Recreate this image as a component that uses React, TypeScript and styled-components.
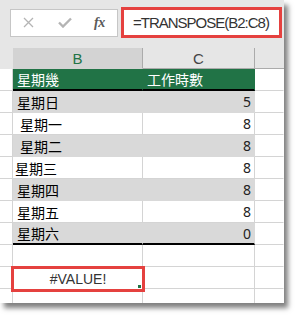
import React from "react";
import styled, { createGlobalStyle } from "styled-components";

const Global = createGlobalStyle`
  html, body { margin: 0; padding: 0; background: #ffffff; }
  body { font-family: "Liberation Sans", "Noto Sans CJK TC", sans-serif; }
`;

const Page = styled.div`
  width: 299px;
  height: 320px;
  background: #ffffff;
`;

const Panel = styled.div`
  width: 284px;
  height: 303px;
  background: #e6e6e6;
  box-shadow: 4px 5px 5px rgba(0, 0, 0, 0.5);
  display: flex;
  flex-direction: column;
  overflow: hidden;
`;

const FormulaBar = styled.div`
  display: flex;
  align-items: center;
  height: 31px;
  margin-top: 7px;
  padding-left: 10px;
  gap: 3px;
`;

const ButtonBox = styled.div`
  width: 108px;
  height: 28px;
  box-sizing: border-box;
  background: #ffffff;
  border: 1px solid #c6c6c6;
  display: flex;
  align-items: center;
  padding-left: 12px;
  gap: 24px;
`;

const Fx = styled.span`
  font-family: "Liberation Serif", serif;
  font-style: italic;
  font-weight: bold;
  font-size: 14px;
  color: #5a5a5a;
  margin-left: -2px;
  letter-spacing: -0.5px;
`;

const FormulaBox = styled.div`
  width: 161px;
  height: 31px;
  box-sizing: border-box;
  background: #ffffff;
  border: 3px solid #e5413f;
  display: flex;
  align-items: center;
  padding-left: 9px;
  font-family: "Liberation Sans", sans-serif;
  font-size: 15px;
  letter-spacing: -1px;
  color: #333;
`;

const Sheet = styled.div`
  margin-top: 9px;
  display: grid;
  grid-template-columns: 13px 130px 112px 29px;
  grid-template-rows: 22px 22px 22px 22px 22px 22px 22px 22px 22px 22px 22px 22px;
  flex: 1;
`;

const Corner = styled.div`
  background: #e6e6e6;
`;

const ColHead = styled.div<{ $active?: boolean }>`
  box-sizing: border-box;
  background: ${(p) => (p.$active ? "#d3d3d3" : "#e6e6e6")};
  border-right: 1px solid #ababab;
  border-bottom: 1px solid ${(p) => (p.$active ? "#d3d3d3" : "#ababab")};
  display: flex;
  align-items: center;
  justify-content: center;
  font-family: "Liberation Sans", sans-serif;
  font-size: 15px;
  color: ${(p) => (p.$active ? "#217346" : "#444444")};
  margin-top: 1px;
`;

const HeadFill = styled.div`
  background: #e6e6e6;
  border-bottom: 1px solid #ababab;
  box-sizing: border-box;
`;

const Cell = styled.div<{
  $fill?: string;
  $thick?: boolean;
  $align?: "left" | "right" | "center";
  $color?: string;
  $pad?: number;
}>`
  box-sizing: border-box;
  background: ${(p) => p.$fill ?? "#ffffff"};
  border-right: 1px solid ${(p) => (p.$fill && p.$fill !== "#ffffff" ? p.$fill : "#d4d4d4")};
  border-bottom: ${(p) =>
    p.$thick ? "2px solid #000000" : `1px solid ${p.$fill && p.$fill !== "#ffffff" ? p.$fill : "#d4d4d4"}`};
  display: flex;
  align-items: center;
  justify-content: ${(p) =>
    p.$align === "right" ? "flex-end" : p.$align === "center" ? "center" : "flex-start"};
  padding: 0 3px 0 ${(p) => p.$pad ?? 4}px;
  font-family: "Noto Sans", "Noto Sans CJK TC", sans-serif;
  font-size: 14px;
  color: ${(p) => p.$color ?? "#000000"};
  white-space: pre;
  overflow: hidden;
`;

const Grid = styled.div<{ $right?: boolean }>`
  box-sizing: border-box;
  background: #ffffff;
  border-bottom: 1px solid #d4d4d4;
  border-right: 1px solid ${(p) => (p.$right ? "transparent" : "#d4d4d4")};
`;

const ErrorCell = styled.div`
  position: relative;
  box-sizing: border-box;
  margin: -1px -2px -3px -2px;
  border: 3px solid #e5413f;
  background: #ffffff;
  display: flex;
  align-items: center;
  justify-content: center;
  font-family: "Liberation Sans", sans-serif;
  font-size: 14px;
  color: #333333;
`;

const Handle = styled.span`
  position: absolute;
  right: 1px;
  bottom: 1px;
  width: 3px;
  height: 3px;
  background: #217346;
`;

const XIcon = () => (
  <svg width="11" height="11" viewBox="0 0 11 11">
    <path d="M1 1 L10 10 M10 1 L1 10" stroke="#b4b4b4" strokeWidth="1.3" fill="none" />
  </svg>
);

const CheckIcon = () => (
  <svg width="14" height="11" viewBox="0 0 14 11">
    <path d="M1 5.5 L5 9.5 L13 1.5" stroke="#b4b4b4" strokeWidth="2.4" fill="none" />
  </svg>
);

type Row = { day: string; hours: string; pad: number };

const rows: Row[] = [
  { day: "星期日", hours: "5", pad: 4 },
  { day: "星期一", hours: "8", pad: 7 },
  { day: "星期二", hours: "8", pad: 7 },
  { day: "星期三", hours: "8", pad: 2 },
  { day: "星期四", hours: "8", pad: 4 },
  { day: "星期五", hours: "8", pad: 4 },
  { day: "星期六", hours: "0", pad: 4 },
];

const GREEN = "#217346";
const GRAY = "#d9d9d9";

export default function App() {
  return (
    <Page>
      <Global />
      <Panel>
        <FormulaBar>
          <ButtonBox>
            <XIcon />
            <CheckIcon />
            <Fx>fx</Fx>
          </ButtonBox>
          <FormulaBox>=TRANSPOSE(B2:C8)</FormulaBox>
        </FormulaBar>
        <Sheet>
          <Corner />
          <ColHead $active>B</ColHead>
          <ColHead>C</ColHead>
          <HeadFill />

          <Grid />
          <Cell $fill={GREEN} $thick $color="#ffffff">星期幾</Cell>
          <Cell $fill={GREEN} $thick $color="#ffffff">工作時數</Cell>
          <Grid $right />

          {rows.map((r, i) => {
            const fill = i % 2 === 0 ? GRAY : "#ffffff";
            const thick = i === rows.length - 1;
            return (
              <React.Fragment key={r.day}>
                <Grid />
                <Cell $fill={fill} $thick={thick} $pad={r.pad}>
                  {r.day}
                </Cell>
                <Cell $fill={fill} $thick={thick} $align="right" $color="#222222">
                  {r.hours}
                </Cell>
                <Grid $right />
              </React.Fragment>
            );
          })}

          <Grid />
          <Cell />
          <Cell />
          <Grid $right />

          <Grid />
          <ErrorCell>
            #VALUE!
            <Handle />
          </ErrorCell>
          <Cell />
          <Grid $right />

          <Grid />
          <Cell />
          <Cell />
          <Grid $right />
        </Sheet>
      </Panel>
    </Page>
  );
}
